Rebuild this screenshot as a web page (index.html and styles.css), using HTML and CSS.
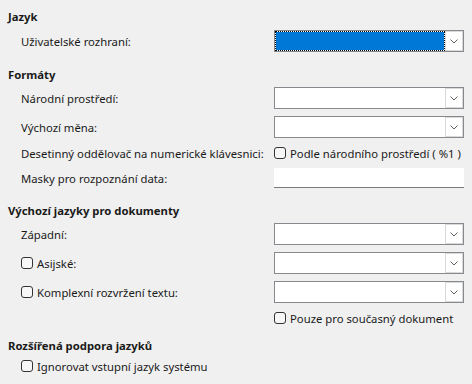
FILE: index.html
```html
<!DOCTYPE html>
<html lang="cs">
<head>
  <meta charset="utf-8">
  <title>Jazyky a národní prostředí</title>
<link rel="stylesheet" href="styles.css">
</head>
<body>
  <div class="page">

    <h3 class="group-title">Jazyk</h3>
    <div class="group">
      <label class="field-label">Uživatelské rozhraní:</label>
      <div class="combo combo-focused">
        <span class="combo-value"></span>
        <span class="combo-btn"><svg width="8" height="5" viewBox="0 0 8 5"><polyline points="0.5,0.5 4,4 7.5,0.5"/></svg></span>
      </div>
    </div>

    <h3 class="group-title">Formáty</h3>
    <div class="group">
      <label class="field-label">Národní prostředí:</label>
      <div class="combo">
        <span class="combo-value"></span>
        <span class="combo-btn"><svg width="8" height="5" viewBox="0 0 8 5"><polyline points="0.5,0.5 4,4 7.5,0.5"/></svg></span>
      </div>

      <label class="field-label">Výchozí měna:</label>
      <div class="combo">
        <span class="combo-value"></span>
        <span class="combo-btn"><svg width="8" height="5" viewBox="0 0 8 5"><polyline points="0.5,0.5 4,4 7.5,0.5"/></svg></span>
      </div>

      <label class="field-label short">Desetinný oddělovač na numerické klávesnici:</label>
      <label class="check short"><span class="box"></span>Podle národního prostředí ( %1 )</label>

      <label class="field-label short-entry">Masky pro rozpoznání data:</label>
      <div class="entry"></div>
    </div>

    <h3 class="group-title">Výchozí jazyky pro dokumenty</h3>
    <div class="group">
      <label class="field-label">Západní:</label>
      <div class="combo">
        <span class="combo-value"></span>
        <span class="combo-btn"><svg width="8" height="5" viewBox="0 0 8 5"><polyline points="0.5,0.5 4,4 7.5,0.5"/></svg></span>
      </div>

      <label class="check indent"><span class="box"></span>Asijské:</label>
      <div class="combo">
        <span class="combo-value"></span>
        <span class="combo-btn"><svg width="8" height="5" viewBox="0 0 8 5"><polyline points="0.5,0.5 4,4 7.5,0.5"/></svg></span>
      </div>

      <label class="check indent"><span class="box"></span>Komplexní rozvržení textu:</label>
      <div class="combo">
        <span class="combo-value"></span>
        <span class="combo-btn"><svg width="8" height="5" viewBox="0 0 8 5"><polyline points="0.5,0.5 4,4 7.5,0.5"/></svg></span>
      </div>

      <span></span>
      <label class="check short"><span class="box"></span>Pouze pro současný dokument</label>
    </div>

    <h3 class="group-title last">Rozšířená podpora jazyků</h3>
    <div class="group">
      <label class="check indent short wide"><span class="box"></span>Ignorovat vstupní jazyk systému</label>
    </div>

  </div>
</body>
</html>
```

FILE: styles.css
```css
html, body {
  margin: 0;
  padding: 0;
  background: #f0f0f0;
}

body {
  font-family: "Noto Sans", "Open Sans", sans-serif;
  font-size: 11.3px;
  color: #1a1a1a;
}

.page {
  width: 472px;
  height: 384px;
  box-sizing: border-box;
  padding: 9px 8px 0;
  overflow: hidden;
}

.group-title {
  margin: 0;
  height: 16px;
  line-height: 16px;
  font-size: 11.3px;
  font-weight: bold;
}

.group {
  display: grid;
  grid-template-columns: 266px 190px;
  row-gap: 7px;
  margin: 4px 0 15px;
}

.group:first-of-type { margin-top: 5px; }

.group-title.last { margin-top: -3px; }

.field-label {
  display: flex;
  align-items: center;
  height: 22px;
  padding-left: 13px;
  white-space: nowrap;
}

.check {
  display: flex;
  align-items: center;
  height: 22px;
  white-space: nowrap;
}

.check.indent { padding-left: 13px; }

.short { height: 16px; }

.short-entry { height: 20px; }

.wide { grid-column: 1 / 3; }

/* combo box */

.combo {
  display: flex;
  box-sizing: border-box;
  height: 22px;
  border: 1px solid #868a8f;
  background: #fff;
}

.combo-value { flex: 1; }

.combo-btn {
  display: flex;
  align-items: center;
  justify-content: center;
  width: 16px;
  border: 1px solid #d9d9d9;
  background: #fff;
}

.combo-btn polyline {
  fill: none;
  stroke: #606060;
  stroke-width: 1;
}

.combo-focused .combo-value {
  background: #0078d7;
  outline: 1px dotted #000;
  outline-offset: -1px;
  box-shadow: inset 0 0 0 1px #fff;
}

/* entry */

.entry {
  box-sizing: border-box;
  height: 20px;
  background: #fff;
  border-bottom: 1px solid #7a7a7a;
}

/* checkbox */

.box {
  box-sizing: border-box;
  width: 12px;
  height: 12px;
  margin-right: 4px;
  border: 1px solid #333;
  border-radius: 3px;
  background: #f7f7f7;
}
```
